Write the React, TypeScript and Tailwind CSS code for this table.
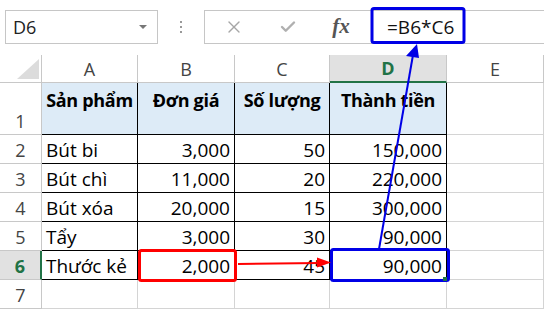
import { X, Check } from 'lucide-react'

const cols = ['A', 'B', 'C', 'D', 'E']

type Cell = { v: string; num?: boolean }

const rows: Cell[][] = [
  [{ v: 'Sản phẩm' }, { v: 'Đơn giá' }, { v: 'Số lượng' }, { v: 'Thành tiền' }],
  [{ v: 'Bút bi' }, { v: '3,000', num: true }, { v: '50', num: true }, { v: '150,000', num: true }],
  [{ v: 'Bút chì' }, { v: '11,000', num: true }, { v: '20', num: true }, { v: '220,000', num: true }],
  [{ v: 'Bút xóa' }, { v: '20,000', num: true }, { v: '15', num: true }, { v: '300,000', num: true }],
  [{ v: 'Tẩy' }, { v: '3,000', num: true }, { v: '30', num: true }, { v: '90,000', num: true }],
  [{ v: 'Thước kẻ' }, { v: '2,000', num: true }, { v: '45', num: true }, { v: '90,000', num: true }],
  [],
]

const font = { fontFamily: '"Open Sans", "Noto Sans", sans-serif' }

function FormulaBar() {
  return (
    <div className="flex h-[55px] items-start pt-[10px] pl-[5px]">
      <div className="flex h-[34px] w-[153px] items-center justify-between border border-[#c6c6c6] pl-[7px] pr-[10px] text-[18px] text-[#222]">
        <span>D6</span>
        <span className="h-0 w-0 border-x-[4px] border-t-[4px] border-x-transparent border-t-[#777]" />
      </div>
      <div className="flex h-[34px] w-[46px] flex-col items-center justify-center gap-[3px]">
        <span className="h-[2px] w-[2px] bg-[#999]" />
        <span className="h-[2px] w-[2px] bg-[#999]" />
        <span className="h-[2px] w-[2px] bg-[#999]" />
      </div>
      <div className="flex h-[34px] flex-1 items-center border-y border-l border-[#c6c6c6]">
        <div className="flex w-[58px] justify-center">
          <X className="h-[20px] w-[20px] text-[#a6a6a6]" strokeWidth={1.6} />
        </div>
        <div className="flex w-[50px] justify-center">
          <Check className="h-[18px] w-[18px] text-[#b0b0b0]" strokeWidth={3.2} />
        </div>
        <div className="flex w-[56px] justify-center">
          <span className="text-[21px] font-bold italic text-[#555]" style={{ fontFamily: '"Liberation Serif", serif' }}>
            fx
          </span>
        </div>
        <span className="pl-[18px] text-[19px] text-[#111]">=B6*C6</span>
      </div>
    </div>
  )
}

function Grid() {
  return (
    <div className="grid grid-cols-[42px_96px_97px_95px_117px_1fr] grid-rows-[28px_52px_29px_29px_29px_29px_29px_29px] text-[19px] leading-[26px]">
      {/* corner */}
      <div className="relative border-r border-b border-[#c8c8c8]">
        <svg className="absolute right-[2px] bottom-[3px]" width="22" height="20" viewBox="0 0 22 20">
          <polygon points="22,0 22,20 0,20" fill="#dcdcdc" />
        </svg>
      </div>
      {cols.map((c) => (
        <div
          key={c}
          className={
            c === 'D'
              ? 'flex items-center justify-center border-r border-b-2 border-r-[#c8c8c8] border-b-[#217346] bg-[#e1e1e1] text-[18px] font-bold text-[#217346]'
              : 'flex items-center justify-center border-r border-b border-[#c8c8c8] text-[18px] text-[#444]'
          }
        >
          {c}
        </div>
      ))}

      {rows.map((row, ri) => {
        const n = ri + 1
        const sel = n === 6
        return [
          <div
            key={`h${n}`}
            className={
              sel
                ? 'flex items-end justify-center border-b border-r-2 border-b-[#c8c8c8] border-r-[#217346] bg-[#e1e1e1] text-[18px] font-bold text-[#217346]'
                : 'flex items-end justify-center border-r border-b border-[#c8c8c8] text-[18px] text-[#444]'
            }
          >
            {n}
          </div>,
          ...cols.map((c, ci) => {
            const cell = row[ci]
            const inTable = n <= 6 && ci < 4
            const border = inTable ? 'border-black' : 'border-[#d4d4d4]'
            if (n === 1 && inTable) {
              return (
                <div
                  key={`${c}${n}`}
                  className={`flex items-start justify-center border-r border-b ${border} bg-[#ddebf7] pt-[4px] text-[18px] font-bold tracking-[-0.3px] whitespace-nowrap text-black`}
                >
                  {cell?.v}
                </div>
              )
            }
            return (
              <div
                key={`${c}${n}`}
                className={`flex items-end border-r border-b ${border} whitespace-nowrap text-black ${
                  cell?.num ? 'justify-end pr-[4px]' : 'justify-start pl-[4px]'
                }`}
              >
                {cell?.v}
              </div>
            )
          }),
        ]
      })}
    </div>
  )
}

export default function App() {
  return (
    <div className="relative h-[309px] w-[544px] overflow-hidden bg-white" style={font}>
      <FormulaBar />
      <Grid />

      {/* annotations */}
      <svg className="pointer-events-none absolute inset-0" width="544" height="309" viewBox="0 0 544 309">
        <rect x="372" y="8.5" width="92" height="34" rx="2" fill="none" stroke="#0000e6" strokeWidth="3" />
        <rect x="139.5" y="250.5" width="96" height="30" rx="2" fill="none" stroke="#ff0000" strokeWidth="3" />
        <rect x="331.5" y="249.5" width="117" height="31" rx="2" fill="none" stroke="#0000e6" strokeWidth="3" />
        <rect x="443" y="277" width="4" height="4" fill="#217346" />
        <line x1="238" y1="264" x2="320" y2="263" stroke="#ff0000" strokeWidth="2" />
        <polygon points="331,262.5 317,257.5 317,267.5" fill="#ff0000" />
        <line x1="379" y1="249" x2="413" y2="55" stroke="#0000e6" strokeWidth="2" />
        <polygon points="417,44 406,56 419,58" fill="#0000e6" />
      </svg>
    </div>
  )
}
